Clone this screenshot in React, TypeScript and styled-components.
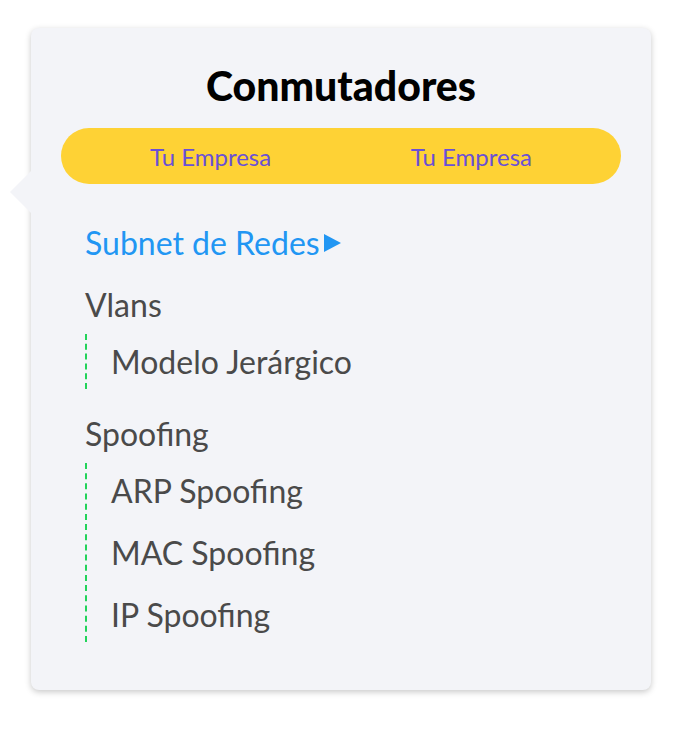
import React from "react";
import styled, { createGlobalStyle } from "styled-components";

const Global = createGlobalStyle`
  html, body { margin: 0; padding: 0; background: #ffffff; }
  body { font-family: Lato, "Noto Sans", sans-serif; }
`;

const Page = styled.div`
  width: 680px;
  height: 734px;
  padding: 28px 29px 0 31px;
  box-sizing: border-box;
`;

const Card = styled.div`
  position: relative;
  width: 620px;
  height: 662px;
  box-sizing: border-box;
  background: #f3f4f8;
  border-radius: 8px;
  box-shadow: 0 2px 6px rgba(0, 0, 0, 0.22);
  padding: 34px 30px 0 30px;
  display: flex;
  flex-direction: column;
`;

const Pointer = styled.div`
  position: absolute;
  left: -21px;
  top: 142px;
  width: 0;
  height: 0;
  border-top: 22px solid transparent;
  border-bottom: 22px solid transparent;
  border-right: 22px solid #f3f4f8;
`;

const Title = styled.h1`
  margin: 0;
  text-align: center;
  font-family: Lato, sans-serif;
  font-weight: 900;
  font-size: 41px;
  line-height: 48px;
  color: #000;
`;

const Pill = styled.div`
  margin-top: 18px;
  height: 56px;
  border-radius: 28px;
  background: #fed235;
  display: flex;
  align-items: center;
  justify-content: space-between;
  padding: 0 89px;
`;

const PillText = styled.span`
  font-size: 24px;
  color: #6a50d6;
`;

const Nav = styled.div`
  padding: 41px 0 0 24px;
  display: flex;
  flex-direction: column;
`;

const Section = styled.div<{ $gap?: number }>`
  margin-bottom: ${(p) => p.$gap ?? 0}px;
`;

const Heading = styled.div<{ $active?: boolean }>`
  font-size: 32px;
  line-height: 36px;
  color: ${(p) => (p.$active ? "#2196f3" : "#4a4a4a")};
  display: flex;
  align-items: center;
  gap: 3px;
`;

const Children = styled.div`
  margin-top: 11px;
  border-left: 2px dashed #22d35a;
  padding: 10px 0 9px 24px;
  display: flex;
  flex-direction: column;
  gap: 26px;
`;

const Child = styled.div`
  font-size: 32px;
  line-height: 36px;
  color: #4a4a4a;
`;

const Tri = styled.svg`
  width: 19px;
  height: 20px;
`;

export default function App() {
  return (
    <>
      <Global />
      <Page>
        <Card>
          <Pointer />
          <Title>Conmutadores</Title>
          <Pill>
            <PillText>Tu Empresa</PillText>
            <PillText>Tu Empresa</PillText>
          </Pill>
          <Nav>
            <Section $gap={26}>
              <Heading $active>
                Subnet de Redes
                <Tri viewBox="0 0 19 20">
                  <path d="M1 1 L18 10 L1 19 Z" fill="#2196f3" />
                </Tri>
              </Heading>
            </Section>
            <Section $gap={27}>
              <Heading>Vlans</Heading>
              <Children>
                <Child>Modelo Jerárgico</Child>
              </Children>
            </Section>
            <Section>
              <Heading>Spoofing</Heading>
              <Children>
                <Child>ARP Spoofing</Child>
                <Child>MAC Spoofing</Child>
                <Child>IP Spoofing</Child>
              </Children>
            </Section>
          </Nav>
        </Card>
      </Page>
    </>
  );
}
